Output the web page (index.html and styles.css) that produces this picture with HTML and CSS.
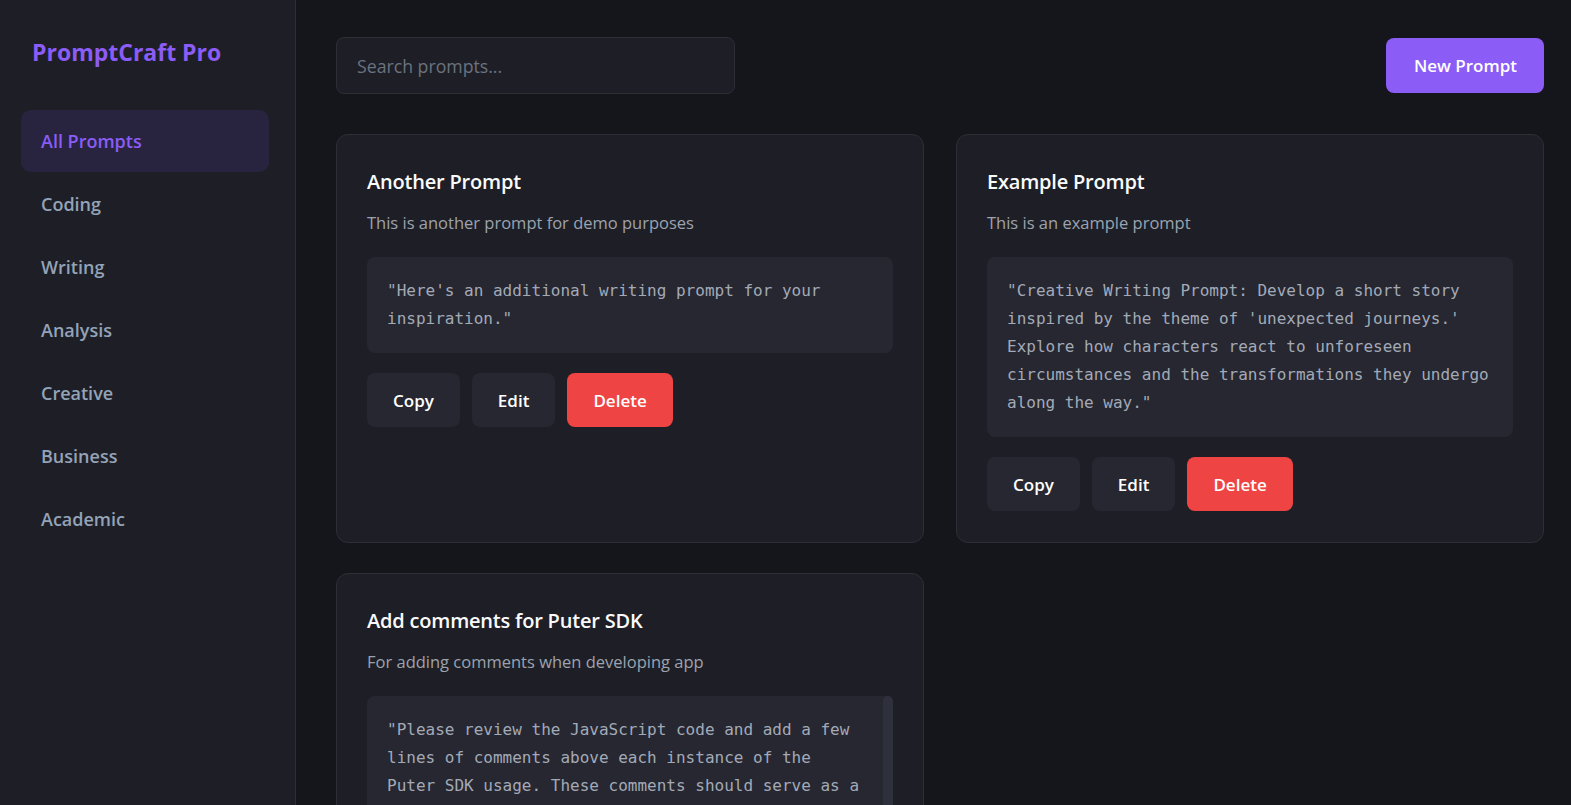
FILE: index.html
```html
<!DOCTYPE html>
<html lang="en">
<head>
<meta charset="utf-8">
<title>PromptCraft Pro</title>
<link rel="stylesheet" href="styles.css">
</head>
<body>
<div class="app">
  <aside class="sidebar">
    <div class="logo">PromptCraft Pro</div>
    <nav class="nav">
      <div class="nav-item active">All Prompts</div>
      <div class="nav-item">Coding</div>
      <div class="nav-item">Writing</div>
      <div class="nav-item">Analysis</div>
      <div class="nav-item">Creative</div>
      <div class="nav-item">Business</div>
      <div class="nav-item">Academic</div>
    </nav>
  </aside>
  <main class="main">
    <header class="topbar">
      <input class="search" type="text" placeholder="Search prompts...">
      <button class="btn-primary">New Prompt</button>
    </header>
    <section class="grid">
      <article class="card">
        <h3 class="card-title">Another Prompt</h3>
        <p class="card-desc">This is another prompt for demo purposes</p>
        <div class="code">"Here's an additional writing prompt for your inspiration."</div>
        <div class="actions">
          <button class="btn">Copy</button>
          <button class="btn">Edit</button>
          <button class="btn btn-danger">Delete</button>
        </div>
      </article>
      <article class="card">
        <h3 class="card-title">Example Prompt</h3>
        <p class="card-desc">This is an example prompt</p>
        <div class="code">"Creative Writing Prompt: Develop a short story inspired by the theme of 'unexpected journeys.' Explore how characters react to unforeseen circumstances and the transformations they undergo along the way."</div>
        <div class="actions">
          <button class="btn">Copy</button>
          <button class="btn">Edit</button>
          <button class="btn btn-danger">Delete</button>
        </div>
      </article>
      <article class="card">
        <h3 class="card-title">Add comments for Puter SDK</h3>
        <p class="card-desc">For adding comments when developing app</p>
        <div class="code scroll">"Please review the JavaScript code and add a few lines of comments above each instance of the Puter SDK usage. These comments should serve as a</div>
      </article>
    </section>
  </main>
</div>
</body>
</html>
```

FILE: styles.css
```css
* { box-sizing: border-box; }
html, body {
  margin: 0;
  height: 100%;
  background: #15161b;
  font-family: "Open Sans", "Noto Sans", sans-serif;
  color: #e5e7eb;
}
body { overflow: hidden; }
.app {
  display: flex;
  height: 805px;
}
.sidebar {
  width: 296px;
  flex-shrink: 0;
  background: #1e1f26;
  border-right: 1px solid #2d2e36;
  padding: 34px 26px 0 21px;
}
.logo {
  padding-left: 11px;
  font-size: 23px;
  font-weight: 700;
  color: #8b5cf6;
  line-height: 36px;
  margin-bottom: 40px;
}
.nav { display: flex; flex-direction: column; gap: 1px; }
.nav-item {
  height: 62px;
  display: flex;
  align-items: center;
  padding: 0 20px;
  border-radius: 10px;
  font-size: 18px;
  font-weight: 600;
  color: #94a3b8;
}
.nav-item.active {
  background: #282440;
  color: #8b5cf6;
}
.main {
  flex: 1;
  padding: 37px 27px 0 40px;
  overflow: hidden;
}
.topbar {
  display: flex;
  justify-content: space-between;
  align-items: center;
  margin-bottom: 40px;
}
.search {
  width: 399px;
  height: 57px;
  background: #1e1f26;
  border: 1px solid #2d2e36;
  border-radius: 8px;
  padding: 0 20px;
  font-family: inherit;
  font-size: 17.7px;
  color: #e5e7eb;
  outline: none;
}
.search::placeholder { color: #6b7280; }
.btn-primary {
  height: 55px;
  padding: 0 27px 0 28px;
  background: #8b5cf6;
  color: #fff;
  border: none;
  border-radius: 8px;
  font-family: inherit;
  font-size: 17px;
  font-weight: 600;
}
.grid {
  display: grid;
  grid-template-columns: 1fr 1fr;
  column-gap: 32px;
  row-gap: 30px;
}
.card {
  background: #1e1f26;
  border: 1px solid #2d2e36;
  border-radius: 12px;
  padding: 30px 30px 31px;
  display: flex;
  flex-direction: column;
}
.card-title {
  margin: 0;
  font-size: 20px;
  line-height: 34px;
  font-weight: 600;
  color: #f9fafb;
  letter-spacing: -0.2px;
}
.card-desc {
  margin: 12px 0 0;
  font-size: 16.5px;
  line-height: 24px;
  color: #9ca3af;
}
.code {
  margin-top: 22px;
  background: #262731;
  border-radius: 8px;
  padding: 20px;
  font-family: "DejaVu Sans Mono", "Liberation Mono", monospace;
  font-size: 16px;
  line-height: 28px;
  color: #a3aab7;
  white-space: pre-wrap;
}
.code.scroll {
  position: relative;
  padding-right: 30px;
  min-height: 140px;
}
.code.scroll::after {
  content: "";
  position: absolute;
  top: 0;
  right: 0;
  width: 10px;
  height: 100%;
  background: #2e303c;
  border-radius: 5px 5px 0 0;
}
.actions {
  display: flex;
  gap: 12px;
  margin-top: 20px;
}
.btn {
  height: 54px;
  padding: 0 26px;
  background: #262731;
  color: #fff;
  border: none;
  border-radius: 8px;
  font-family: inherit;
  font-size: 17px;
  font-weight: 600;
}
.btn-danger { background: #ef4444; }
```
